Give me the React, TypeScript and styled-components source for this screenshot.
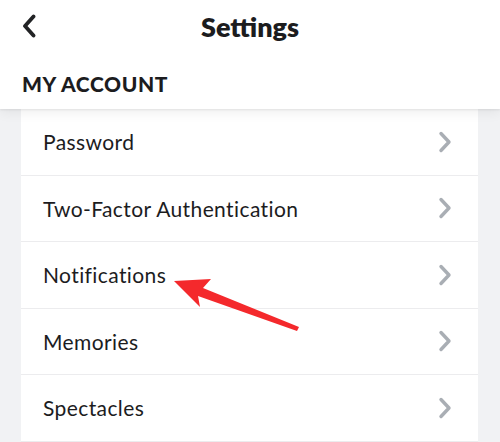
import React from "react";
import styled, { createGlobalStyle } from "styled-components";

const Global = createGlobalStyle`
  html, body { margin: 0; padding: 0; background: #f1f2f4; }
  body { font-family: "Lato", "Noto Sans", sans-serif; color: #1c1c1e; }
`;

const Page = styled.div`
  position: relative;
  width: 500px;
  height: 442px;
  overflow: hidden;
  background: #f1f2f4;
`;

const Header = styled.header`
  position: relative;
  z-index: 2;
  height: 109px;
  background: #ffffff;
  box-shadow: 0 1px 2px rgba(0, 0, 0, 0.08), 0 3px 12px rgba(0, 0, 0, 0.07);
  display: flex;
  flex-direction: column;
`;

const TitleBar = styled.div`
  height: 52px;
  display: grid;
  grid-template-columns: 60px 1fr 60px;
  align-items: center;
`;

const BackButton = styled.div`
  display: flex;
  align-items: center;
  padding-left: 22px;
  height: 100%;
`;

const Title = styled.h1`
  margin: 0;
  text-align: center;
  font-size: 27px;
  font-weight: 800;
  color: #1c1c1e;
  letter-spacing: 0;
`;

const Section = styled.h2`
  margin: 0;
  padding: 19px 0 0 22px;
  font-size: 21px;
  font-weight: 900;
  color: #1c1c1e;
  letter-spacing: 0.6px;
`;

const Card = styled.ul`
  list-style: none;
  margin: 0 22px 0 21px;
  padding: 0;
  background: #ffffff;
`;

const Row = styled.li`
  box-sizing: border-box;
  height: 66.5px;
  display: flex;
  align-items: center;
  justify-content: space-between;
  padding: 0 26px 0 22px;
  border-bottom: 1px solid #ececee;
  font-size: 21px;
  letter-spacing: 0.4px;
  color: #1c1c1e;
`;

const Overlay = styled.svg`
  position: absolute;
  left: 0;
  top: 0;
  z-index: 3;
  pointer-events: none;
`;

const Chevron = () => (
  <svg width="14" height="22" viewBox="0 0 14 22">
    <path d="M3 2.5 L11 11 L3 19.5" fill="none" stroke="#a9aeb4" strokeWidth="3.4" strokeLinecap="round" strokeLinejoin="round" />
  </svg>
);

const BackIcon = () => (
  <svg width="14" height="24" viewBox="0 0 14 24">
    <path d="M11.5 2.5 L3 12 L11.5 21.5" fill="none" stroke="#222325" strokeWidth="3.8" strokeLinecap="round" strokeLinejoin="round" />
  </svg>
);

const items = ["Password", "Two-Factor Authentication", "Notifications", "Memories", "Spectacles"];

export default function App() {
  return (
    <Page>
      <Global />
      <Header>
        <TitleBar>
          <BackButton>
            <BackIcon />
          </BackButton>
          <Title>Settings</Title>
          <span />
        </TitleBar>
        <Section>MY ACCOUNT</Section>
      </Header>
      <Card>
        {items.map((t) => (
          <Row key={t}>
            <span>{t}</span>
            <Chevron />
          </Row>
        ))}
      </Card>
      <Overlay width="500" height="442" viewBox="0 0 500 442">
        <polygon
          points="174,281 211,279 203,288 299,327 297,331 198,296 200,307"
          fill="#f4292c"
        />
      </Overlay>
    </Page>
  );
}
